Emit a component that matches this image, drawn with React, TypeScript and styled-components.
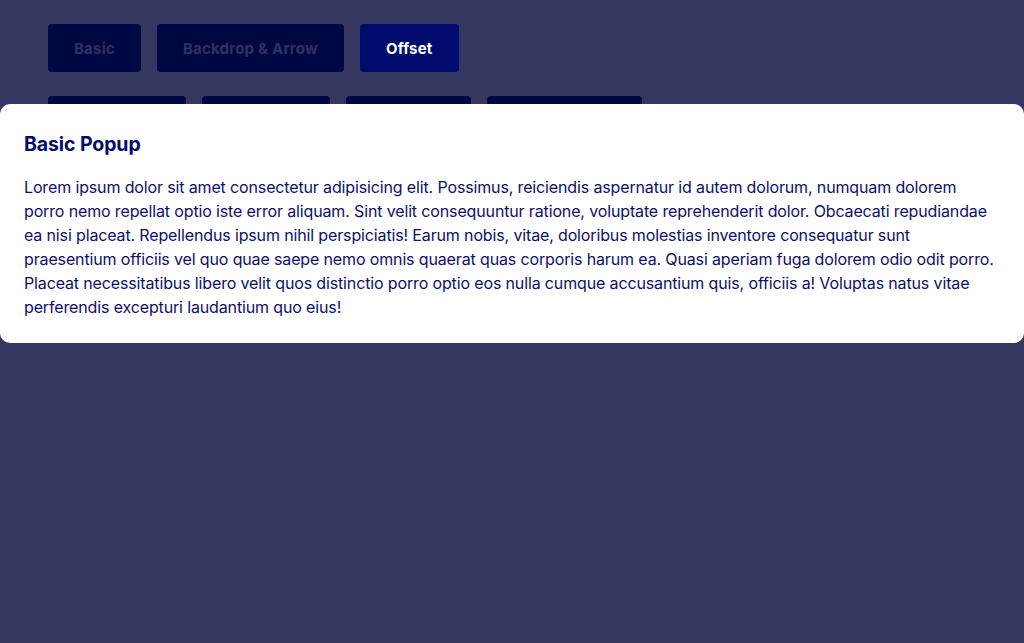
import styled, { createGlobalStyle } from "styled-components";

const GlobalStyle = createGlobalStyle`
  html, body {
    margin: 0;
    padding: 0;
    background: #343760;
  }
  body {
    font-family: "Inter", "Noto Sans", sans-serif;
  }
`;

const firstRow = [
    { label: "Basic", active: false },
    { label: "Backdrop & Arrow", active: false },
    { label: "Offset", active: true },
];

// second row sits mostly under the popup, only the top edge shows
const secondRow = [
    { label: "Top Start", width: 138 },
    { label: "Top End", width: 128 },
    { label: "Right", width: 125 },
    { label: "Bottom End", width: 155 },
];

const lines = [
    "Lorem ipsum dolor sit amet consectetur adipisicing elit. Possimus, reiciendis aspernatur id autem dolorum, numquam dolorem",
    "porro nemo repellat optio iste error aliquam. Sint velit consequuntur ratione, voluptate reprehenderit dolor. Obcaecati repudiandae",
    "ea nisi placeat. Repellendus ipsum nihil perspiciatis! Earum nobis, vitae, doloribus molestias inventore consequatur sunt",
    "praesentium officiis vel quo quae saepe nemo omnis quaerat quas corporis harum ea. Quasi aperiam fuga dolorem odio odit porro.",
    "Placeat necessitatibus libero velit quos distinctio porro optio eos nulla cumque accusantium quis, officiis a! Voluptas natus vitae",
    "perferendis excepturi laudantium quo eius!",
];

export default function App(): JSX.Element {
    return (
        <>
            <GlobalStyle />
            <Page>
                <Row>
                    {firstRow.map((b) => (
                        <Button key={b.label} $active={b.active}>
                            {b.label}
                        </Button>
                    ))}
                </Row>
                <Row>
                    {secondRow.map((b) => (
                        <Button key={b.label} $active={false} $width={b.width}>
                            {b.label}
                        </Button>
                    ))}
                </Row>
            </Page>
            <Popup>
                <Title>Basic Popup</Title>
                <Body>
                    {lines.map((line, i) => (
                        <Line key={i}>{line} </Line>
                    ))}
                </Body>
            </Popup>
        </>
    );
}

const Page = styled.main`
  display: flex;
  flex-direction: column;
  gap: 24px;
  padding: 24px 48px;
  min-height: 643px;
  box-sizing: border-box;
`;

const Row = styled.div`
  display: flex;
  gap: 16px;
`;

const Button = styled.button<{ $active: boolean; $width?: number }>`
  height: 48px;
  width: ${(p) => (p.$width ? `${p.$width}px` : "auto")};
  padding: 0 26px;
  box-sizing: border-box;
  border: none;
  border-radius: 4px;
  font-family: "Inter", "Noto Sans", sans-serif;
  font-size: 15px;
  font-weight: 700;
  letter-spacing: 0.2px;
  white-space: nowrap;
  background: ${(p) => (p.$active ? "#000c6d" : "#000843")};
  color: ${(p) => (p.$active ? "#ffffff" : "#2e3264")};
`;

const Popup = styled.section`
  position: absolute;
  top: 104px;
  left: 0;
  right: 0;
  background: #ffffff;
  border-radius: 10px;
  padding: 28px 24px 24px;
  color: #0b106e;
`;

const Title = styled.h2`
  margin: 0 0 19px;
  font-family: "Inter", "Noto Sans", sans-serif;
  font-size: 19.5px;
  font-weight: 700;
  letter-spacing: -0.1px;
  line-height: 24px;
  color: #000b6a;
`;

const Body = styled.p`
  margin: 0;
  font-family: "Inter", "Noto Sans", sans-serif;
  font-size: 16px;
  line-height: 24px;
  letter-spacing: -0.14px;
`;

const Line = styled.span`
  display: block;
  white-space: nowrap;
`;
